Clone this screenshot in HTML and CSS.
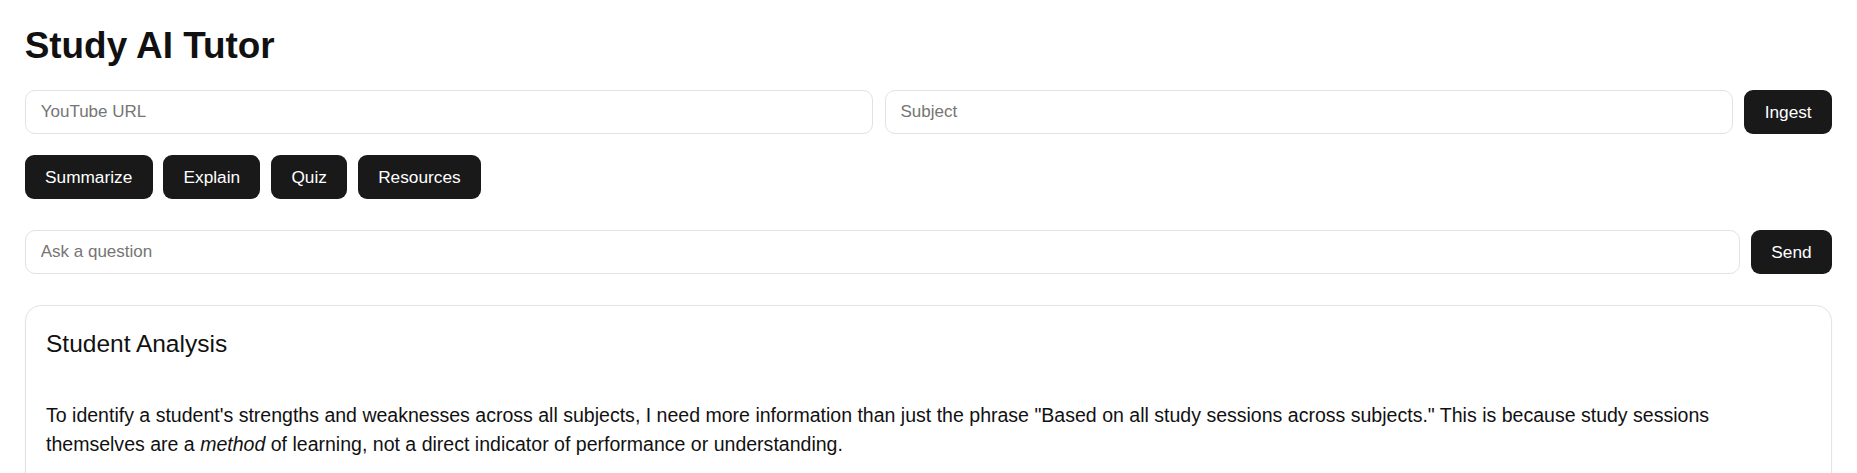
FILE: index.html
```html
<!DOCTYPE html>
<html lang="en">
<head>
<meta charset="utf-8">
<title>Study AI Tutor</title>
<link rel="stylesheet" href="styles.css">
</head>
<body>
<main class="app">
  <h1 class="title">Study AI Tutor</h1>

  <div class="field-row ingest-row">
    <input class="text-input" type="text" placeholder="YouTube URL">
    <input class="text-input" type="text" placeholder="Subject">
    <button class="btn">Ingest</button>
  </div>

  <div class="actions">
    <button class="btn">Summarize</button>
    <button class="btn">Explain</button>
    <button class="btn">Quiz</button>
    <button class="btn">Resources</button>
  </div>

  <div class="field-row ask-row">
    <input class="text-input" type="text" placeholder="Ask a question">
    <button class="btn">Send</button>
  </div>

  <section class="card">
    <h3 class="card-title">Student Analysis</h3>
    <div class="card-body">
      <p>To identify a student's strengths and weaknesses across all subjects, I need more information than just the phrase "Based on all study sessions across subjects." This is because study sessions themselves are a <em>method</em> of learning, not a direct indicator of performance or understanding.</p>
    </div>
  </section>
</main>
</body>
</html>
```

FILE: styles.css
```css
* {
  box-sizing: border-box;
}

html, body {
  margin: 0;
  padding: 0;
  background: #ffffff;
}

body {
  font-family: "Liberation Sans", Arial, Helvetica, sans-serif;
  color: #111111;
}

.app {
  padding: 23.8px 25px 40px 24.7px;
}

.title {
  margin: 0 0 22.4px;
  font-size: 36.9px;
  line-height: 44.2px;
  font-weight: 700;
  color: #111111;
}

.field-row {
  display: flex;
  align-items: stretch;
  height: 44px;
}

.ingest-row {
  gap: 11.5px;
  margin-bottom: 21px;
}

.ask-row {
  gap: 11px;
  margin-bottom: 31px;
}

.text-input {
  flex: 1 1 0;
  min-width: 0;
  height: 44px;
  padding: 0 15px;
  border: 1px solid #e2e2e2;
  border-radius: 10px;
  background: #ffffff;
  font-family: inherit;
  font-size: 17px;
  color: #111111;
  outline: none;
}

.text-input::placeholder {
  color: #757575;
}

.btn {
  flex: 0 0 auto;
  display: inline-flex;
  align-items: center;
  justify-content: center;
  height: 44px;
  padding: 0 20.35px;
  border: none;
  border-radius: 9px;
  background: #191919;
  color: #ffffff;
  font-family: inherit;
  font-size: 17.25px;
  cursor: pointer;
}

.actions {
  display: flex;
  gap: 10.6px;
  margin-bottom: 31px;
}

.card {
  border: 1px solid #e4e4e4;
  border-radius: 16px;
  padding: 22.8px 20.3px 24px;
  background: #ffffff;
  box-shadow: 0 1px 3px rgba(0, 0, 0, 0.04);
}

.card-title {
  margin: 0;
  font-size: 24.5px;
  line-height: 29.4px;
  font-weight: 400;
  color: #111111;
}

.card-body {
  padding-top: 22.7px;
}

.card-body p {
  margin: 19.6px 0;
  font-size: 19.55px;
  line-height: 29.4px;
  color: #111111;
}
```
